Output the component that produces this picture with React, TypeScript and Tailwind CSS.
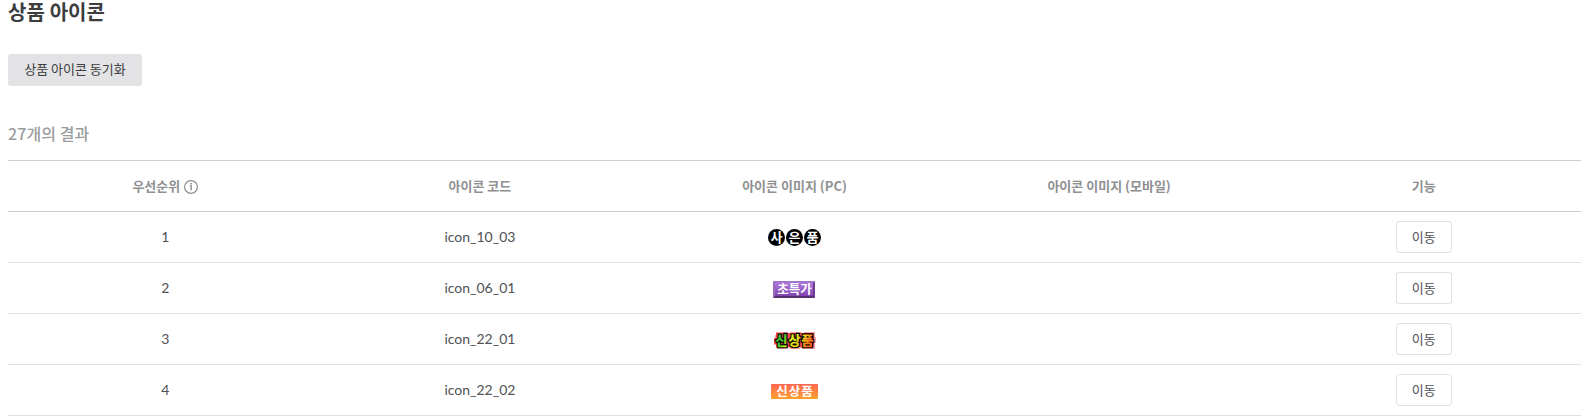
import type { ReactNode } from "react";

function CircleBadge() {
  return (
    <span className="mt-px flex gap-px">
      {["사", "은", "품"].map((c) => (
        <span
          key={c}
          className="flex h-[17px] w-[17px] items-center justify-center rounded-full bg-black text-[13px] leading-[17px] font-bold text-white"
        >
          {c}
        </span>
      ))}
    </span>
  );
}

function PurpleBadge() {
  return (
    <span className="mt-[3px] flex h-[17px] w-[42px] items-center justify-center rounded-[1px] border-2 border-t-[#a477cf] border-r-[#6d3d93] border-b-[#563070] border-l-[#9a6cc0] bg-linear-to-b from-[#b078da] to-[#8144ae] text-[12.5px] leading-[13px] font-bold text-white">
      초특가
    </span>
  );
}

function NeonBadge() {
  const text = {
    x: 21.5,
    y: 12.5,
    textAnchor: "middle" as const,
    fontSize: 13,
    fontWeight: 700,
    textLength: 38,
  };
  return (
    <svg width="43" height="17" viewBox="0 0 43 17" className="mt-[2px] overflow-visible">
      <defs>
        <linearGradient id="neon" x1="0" y1="0" x2="1" y2="0.25">
          <stop offset="0" stopColor="#22b14c" />
          <stop offset="0.3" stopColor="#4fd02c" />
          <stop offset="0.5" stopColor="#e0f21c" />
          <stop offset="0.8" stopColor="#ffd018" />
          <stop offset="1" stopColor="#ff6a1c" />
        </linearGradient>
      </defs>
      <path d="M3 0h12v1h2v-1h12v1h2v-1h11v5h1v6h-1v6h-13v-1h-2v1h-10v-1h-3v1h-10v-4h-3v-6h1v-4h1z" fill="#ffa0a0" />
      <path d="M3 1h38v14h-38v-3h-2v-6h2z" fill="#f04848" />
      <text {...text} fill="#000" stroke="#000" strokeWidth="2.6" strokeLinejoin="miter">
        신상품
      </text>
      <text {...text} fill="url(#neon)" stroke="url(#neon)" strokeWidth="0.3" aria-hidden="true">
        신상품
      </text>
    </svg>
  );
}

function OrangeBadge() {
  return (
    <span className="mt-[2px] flex h-[15px] w-[47px] items-center justify-center rounded-[1px] bg-linear-to-b from-[#ff6550] to-[#ffa028] pl-px text-[12.5px] leading-[15px] font-bold tracking-[1px] text-white">
      신상품
    </span>
  );
}

function InfoIcon() {
  return (
    <svg width="14" height="14" viewBox="0 0 14 14" fill="none" stroke="#8d8e90" className="mt-[2px] ml-1">
      <circle cx="7" cy="7" r="6.4" strokeWidth="1.2" />
      <path d="M5.8 5.9h1.4v4.4" strokeWidth="1.4" />
      <path d="M6.3 3.8h1.6" strokeWidth="1.5" />
    </svg>
  );
}

const rows: { rank: number; code: string; badge: ReactNode }[] = [
  { rank: 1, code: "icon_10_03", badge: <CircleBadge /> },
  { rank: 2, code: "icon_06_01", badge: <PurpleBadge /> },
  { rank: 3, code: "icon_22_01", badge: <NeonBadge /> },
  { rank: 4, code: "icon_22_02", badge: <OrangeBadge /> },
];

export default function App() {
  return (
    <main className="h-[420px] w-[1586px] overflow-hidden bg-white pr-[5px] pl-2 font-['Lato','Noto_Sans_CJK_KR',sans-serif] text-[#505154]">
      <h1 className="h-[54px] text-[20px] leading-[25px] font-bold text-[#3c3d3f]">상품 아이콘</h1>
      <button className="block h-8 w-[134px] rounded-[3px] bg-[#e3e3e5] pb-[2px] font-['Noto_Sans_CJK_KR',sans-serif] text-[13px] text-[#3c3d3f]">
        상품 아이콘 동기화
      </button>
      <p className="flex h-[74px] items-center pt-[20px] font-['Noto_Sans_CJK_KR',sans-serif] text-[16px] font-medium tracking-[0.1px] text-[#9b9c9e]">
        27개의 결과
      </p>
      <div className="border-t border-[#cfcfd1]">
        <div className="grid h-[51px] grid-cols-5 border-b border-[#cfcfd1] pb-px font-['Noto_Sans_CJK_KR',sans-serif] text-[13px] font-bold text-[#8f9092] *:flex *:items-center *:justify-center">
          <div>
            우선순위
            <InfoIcon />
          </div>
          <div>아이콘 코드</div>
          <div>아이콘 이미지 (PC)</div>
          <div>아이콘 이미지 (모바일)</div>
          <div>기능</div>
        </div>
        {rows.map((r) => (
          <div
            key={r.rank}
            className="grid h-[51px] grid-cols-5 border-b border-[#e2e2e4] text-[14px] *:flex *:items-center *:justify-center"
          >
            <div className="pb-[2px]">{r.rank}</div>
            <div className="pb-[2px]">{r.code}</div>
            <div>{r.badge}</div>
            <div />
            <div>
              <button className="h-8 w-14 rounded-[3px] border border-[#e2e2e4] pt-px text-[13px]">이동</button>
            </div>
          </div>
        ))}
      </div>
    </main>
  );
}
